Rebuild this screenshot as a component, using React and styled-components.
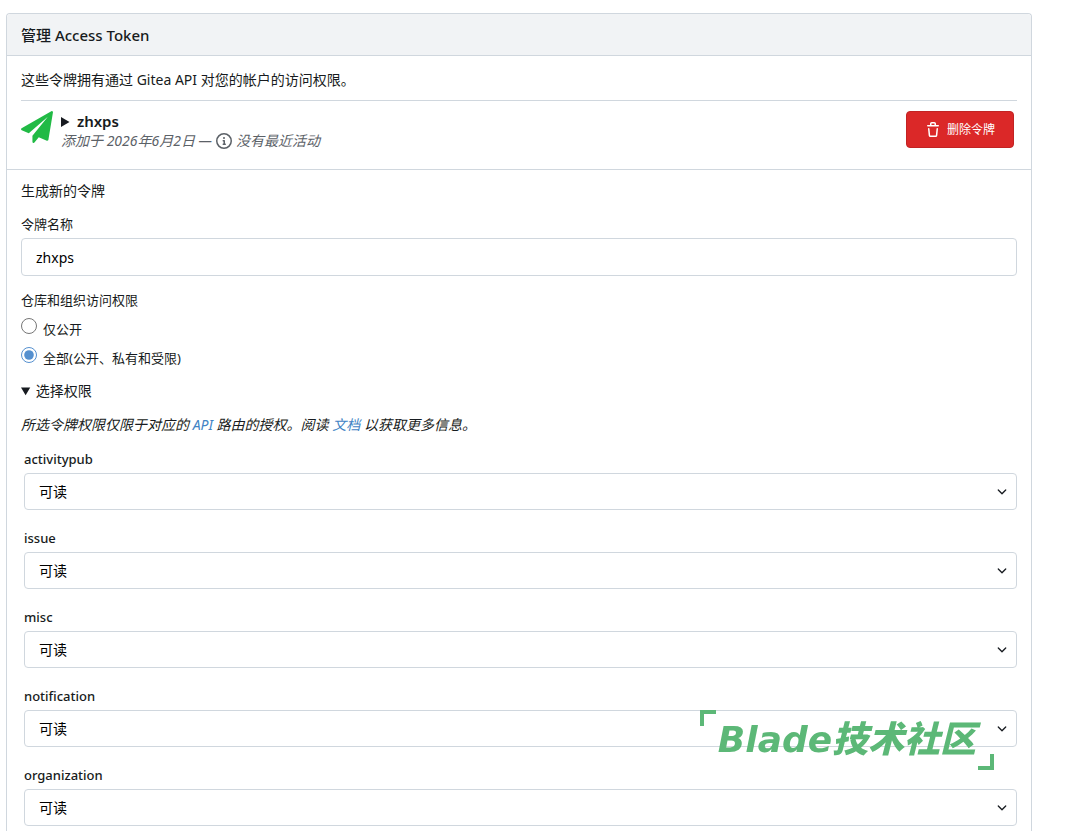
import React from "react";
import styled, { createGlobalStyle, css } from "styled-components";

const colors = {
  text: "#171b20",
  muted: "#5b6167",
  border: "#d0d7de",
  box: "#f1f3f5",
  link: "#4183c4",
  green: "#21ba45",
  red: "#db2828",
  watermark: "#5cb877",
};

const GlobalStyle = createGlobalStyle`
  *, *::before, *::after {
    box-sizing: border-box;
  }

  body {
    margin: 0;
    background: white;
    color: ${colors.text};
    font-family: "Noto Sans", "Noto Sans CJK SC", sans-serif;
    font-size: 14px;
    line-height: 20px;
  }
`;

const controlStyle = css`
  display: block;
  width: 100%;
  padding: 0 14px;
  border: 1px solid ${colors.border};
  border-radius: 4px;
  background: white;
  color: black;
  font: inherit;
  font-size: 14px;
`;

const Page = styled.main`
  min-height: 100vh;
  padding: 13px 50px 0 6px;
  display: flex;
`;

const Card = styled.section`
  flex: 1;
  min-width: 0;
  border: 1px solid ${colors.border};
  border-bottom: 0;
  border-radius: 4px 4px 0 0;
`;

const CardHeader = styled.h1`
  margin: 0;
  padding: 11px 14px 10px;
  border-bottom: 1px solid ${colors.border};
  border-radius: 4px 4px 0 0;
  background: ${colors.box};
  font-size: 15px;
  font-weight: 500;
`;

const TokenSegment = styled.div`
  padding: 14px 14px 0;
  border-bottom: 1px solid ${colors.border};
`;

const Description = styled.p`
  margin: 0;
  padding-bottom: 10px;
  border-bottom: 1px solid ${colors.border};
  font-size: ${(props) => props.$size || 14}px;
`;

const TokenItem = styled.div`
  display: flex;
  align-items: flex-start;
  padding: 10px 3px 18px 0;
`;

const TokenBody = styled.div`
  flex: 1;
  min-width: 0;
  margin-left: 8px;
`;

const TokenName = styled.summary`
  font-size: 15px;
  font-weight: 600;
  cursor: pointer;
`;

const TokenMeta = styled.div`
  display: flex;
  align-items: center;
  gap: 4px;
  color: ${colors.muted};
  font-style: italic;
`;

const DeleteButton = styled.button`
  display: flex;
  align-items: center;
  gap: 6px;
  height: 37px;
  padding: 0 18px;
  border: 1px solid #c22323;
  border-radius: 4px;
  background: ${colors.red};
  color: white;
  font: inherit;
  font-size: 12px;
  cursor: pointer;
`;

const Icon = styled.svg`
  flex: none;
  display: block;
  width: ${(props) => props.$size}px;
  height: ${(props) => props.$size}px;
  fill: ${(props) => props.$color || "currentColor"};
`;

const Form = styled.form`
  padding: 11px 14px 8px;
`;

const FormTitle = styled.h2`
  margin: 0 0 13px;
  font-size: 14px;
  font-weight: 400;
`;

const Label = styled.label`
  display: block;
  margin-bottom: 4px;
  font-size: 13px;
  font-weight: ${(props) => (props.$strong ? 500 : 400)};
`;

const TextInput = styled.input`
  ${controlStyle}
  height: 38px;
`;

const Fieldset = styled.fieldset`
  margin: 14px 0 12px;
  padding: 0;
  border: 0;
`;

const Legend = styled.legend`
  margin-bottom: 8px;
  padding: 0;
  font-size: 13px;
`;

const RadioRow = styled.label`
  display: flex;
  align-items: flex-start;
  gap: 6px;
  height: 22px;
  font-size: 13px;
  line-height: 22px;

  & + & {
    margin-top: 7px;
  }
`;

const Radio = styled.input`
  width: 16px;
  height: 16px;
  margin: 0;
  accent-color: #5590cf;
`;

const Summary = styled.summary`
  cursor: pointer;
`;

const Hint = styled.p`
  margin: 14px 0;
  font-style: italic;
`;

const Link = styled.a`
  color: ${colors.link};
  text-decoration: none;
`;

const Scopes = styled.div`
  display: grid;
  gap: 18px;
  padding-left: 3px;
`;

const SelectWrapper = styled.div`
  display: grid;
  align-items: center;

  > * {
    grid-area: 1 / 1;
  }

  > svg {
    justify-self: end;
    margin-right: 8px;
    pointer-events: none;
  }
`;

const Select = styled.select`
  ${controlStyle}
  height: 37px;
  appearance: none;
`;

const Watermark = styled.div`
  position: fixed;
  right: 88px;
  bottom: 61px;
  width: 294px;
  height: 60px;
  display: grid;
  place-items: center;
  color: ${colors.watermark};
  font: italic 900 36px / 36px "DejaVu Sans", "Noto Sans CJK SC", sans-serif;
  white-space: nowrap;
  pointer-events: none;

  &::before,
  &::after {
    content: "";
    position: absolute;
    width: 16px;
    height: 16px;
    border: 0 solid ${colors.watermark};
  }

  &::before {
    top: 0;
    left: 0;
    border-width: 4px 0 0 4px;
  }

  &::after {
    right: 0;
    bottom: 0;
    border-width: 0 4px 4px 0;
  }
`;

const SendIcon = () => (
  <Icon viewBox="0 0 1792 1792" $size={32} $color={colors.green} aria-hidden="true">
    <path d="M1764 11q33 24 27 64l-256 1536q-5 29-32 45-14 8-31 8-11 0-24-5l-453-185-242 295q-18 23-49 23-13 0-22-4-19-7-30.500-23.500t-11.500-36.500v-349l864-1059-1069 925-395-162q-37-14-40-55-2-40 32-59l1664-960q15-9 32-9 20 0 36 11z" />
  </Icon>
);

const InfoIcon = () => (
  <Icon viewBox="0 0 16 16" $size={16} aria-hidden="true">
    <path d="M0 8a8 8 0 1 1 16 0A8 8 0 0 1 0 8Zm8-6.5a6.5 6.5 0 1 0 0 13 6.5 6.5 0 0 0 0-13ZM6.5 7.75A.75.75 0 0 1 7.25 7h1a.75.75 0 0 1 .75.75v2.75h.25a.75.75 0 0 1 0 1.5h-2a.75.75 0 0 1 0-1.5h.25v-2h-.25a.75.75 0 0 1-.75-.75ZM8 6a1 1 0 1 1 0-2 1 1 0 0 1 0 2Z" />
  </Icon>
);

const TrashIcon = () => (
  <Icon viewBox="0 0 16 16" $size={16} aria-hidden="true">
    <path d="M11 1.75V3h2.25a.75.75 0 0 1 0 1.5H2.75a.75.75 0 0 1 0-1.5H5V1.75C5 .784 5.784 0 6.75 0h2.5C10.216 0 11 .784 11 1.75ZM4.496 6.675l.66 6.6a.25.25 0 0 0 .249.225h5.19a.25.25 0 0 0 .249-.225l.66-6.6a.75.75 0 0 1 1.492.149l-.66 6.6A1.748 1.748 0 0 1 10.595 15h-5.19a1.75 1.75 0 0 1-1.741-1.575l-.66-6.6a.75.75 0 1 1 1.492-.15ZM6.5 1.75V3h3V1.75a.25.25 0 0 0-.25-.25h-2.5a.25.25 0 0 0-.25.25Z" />
  </Icon>
);

const ChevronIcon = () => (
  <Icon viewBox="0 0 16 16" $size={14} aria-hidden="true">
    <path d="M12.78 5.22a.749.749 0 0 1 0 1.06l-4.25 4.25a.749.749 0 0 1-1.06 0L3.22 6.28a.749.749 0 1 1 1.06-1.06L8 8.939l3.72-3.719a.749.749 0 0 1 1.06 0Z" />
  </Icon>
);

const scopes = ["activitypub", "issue", "misc", "notification", "organization"];

const ScopeField = ({ name }) => (
  <div>
    <Label $strong htmlFor={`scope-${name}`}>
      {name}
    </Label>
    <SelectWrapper>
      <Select id={`scope-${name}`} name={name} defaultValue="read">
        <option value="read">可读</option>
      </Select>
      <ChevronIcon />
    </SelectWrapper>
  </div>
);

const App = () => {
  const [tokenName, setTokenName] = React.useState("zhxps");
  const [access, setAccess] = React.useState("all");

  return (
    <>
      <GlobalStyle />
      <Page>
        <Card>
          <CardHeader>管理 Access Token</CardHeader>

          <TokenSegment>
            <Description>这些令牌拥有通过 Gitea API 对您的帐户的访问权限。</Description>
            <TokenItem>
              <SendIcon />
              <TokenBody>
                <details>
                  <TokenName>zhxps</TokenName>
                </details>
                <TokenMeta>
                  <span>添加于 2026年6月2日 —</span>
                  <InfoIcon />
                  <span>没有最近活动</span>
                </TokenMeta>
              </TokenBody>
              <DeleteButton type="button">
                <TrashIcon />
                删除令牌
              </DeleteButton>
            </TokenItem>
          </TokenSegment>

          <Form onSubmit={(e) => e.preventDefault()}>
            <FormTitle>生成新的令牌</FormTitle>
            <Label htmlFor="token-name">令牌名称</Label>
            <TextInput
              id="token-name"
              value={tokenName}
              onChange={(e) => setTokenName(e.target.value)}
            />

            <Fieldset>
              <Legend>仓库和组织访问权限</Legend>
              <RadioRow>
                <Radio
                  type="radio"
                  name="access"
                  checked={access === "public"}
                  onChange={() => setAccess("public")}
                />
                仅公开
              </RadioRow>
              <RadioRow>
                <Radio
                  type="radio"
                  name="access"
                  checked={access === "all"}
                  onChange={() => setAccess("all")}
                />
                全部(公开、私有和受限)
              </RadioRow>
            </Fieldset>

            <details open>
              <Summary>选择权限</Summary>
              <Hint>
                所选令牌权限仅限于对应的 <Link href="#api">API</Link> 路由的授权。阅读{" "}
                <Link href="#docs">文档</Link> 以获取更多信息。
              </Hint>
              <Scopes>
                {scopes.map((name) => (
                  <ScopeField key={name} name={name} />
                ))}
              </Scopes>
            </details>
          </Form>
        </Card>
      </Page>
      <Watermark>Blade技术社区</Watermark>
    </>
  );
};

export default App;
